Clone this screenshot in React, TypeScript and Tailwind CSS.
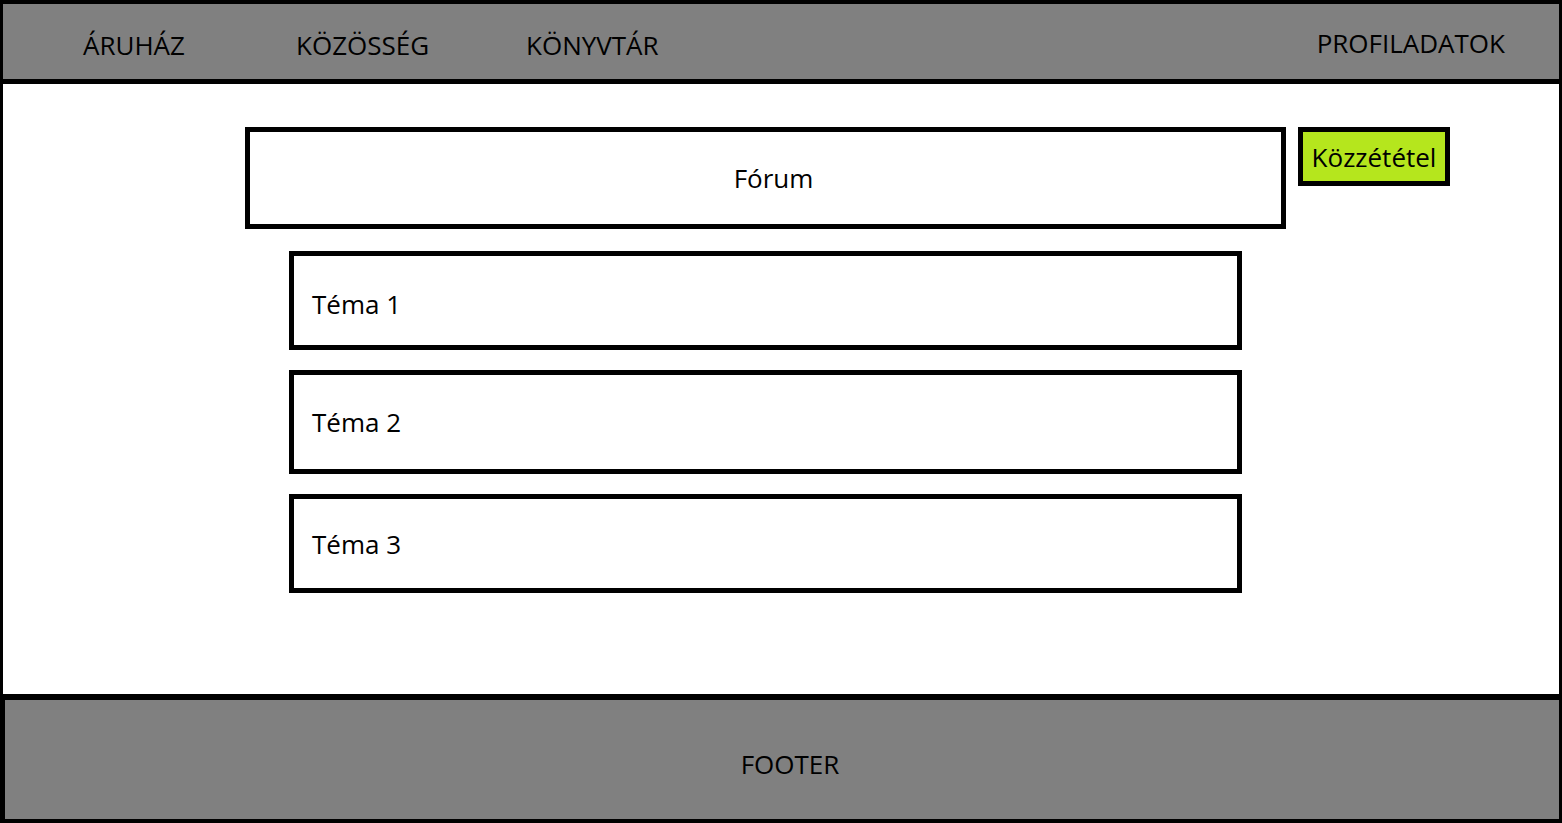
const navItems = [
  { label: 'ÁRUHÁZ', href: '#aruhaz', width: 'w-[213px]' },
  { label: 'KÖZÖSSÉG', href: '#kozosseg', width: 'w-[230px]' },
  { label: 'KÖNYVTÁR', href: '#konyvtar', width: '' },
];

const topics = [
  { title: 'Téma 1', size: 'min-h-[99px] pt-1.5' },
  { title: 'Téma 2', size: 'min-h-[104px]' },
  { title: 'Téma 3', size: 'min-h-[99px]' },
];

function Header() {
  return (
    <header className="flex h-20 items-center justify-between border-b-5 border-black bg-[#808080] pr-[54px] pl-20">
      <nav className="flex pt-1.5">
        {navItems.map((item) => (
          <div key={item.label} className={item.width}>
            <a href={item.href}>{item.label}</a>
          </div>
        ))}
      </nav>
      <a href="#profil" className="pt-0.5">
        PROFILADATOK
      </a>
    </header>
  );
}

function Topic({ title, size }: { title: string; size: string }) {
  return (
    <li className={`flex items-center border-5 border-black pl-[18px] ${size}`}>
      <a href="#tema">{title}</a>
    </li>
  );
}

export default function App() {
  return (
    <div className="flex min-h-screen flex-col bg-black font-['Open_Sans','Noto_Sans',sans-serif] text-[26px] leading-9 text-black">
      <div className="flex grow flex-col border-x-3 border-t-4 border-black bg-white">
        <Header />
        <main className="flex grow items-start gap-3 pt-[43px] pr-[109px] pb-10 pl-[242px]">
          <section className="flex grow flex-col gap-[22px]">
            <h1 className="flex min-h-[102px] items-center justify-center border-5 border-black pl-4">
              Fórum
            </h1>
            <ul className="flex flex-col gap-5 px-11">
              {topics.map((topic) => (
                <Topic key={topic.title} {...topic} />
              ))}
            </ul>
          </section>
          <button
            type="button"
            className="h-[59px] w-[152px] shrink-0 border-5 border-black bg-[#b5e61d] text-center"
          >
            Közzététel
          </button>
        </main>
      </div>
      <footer className="flex h-[129px] items-center justify-center border-t-6 border-r-3 border-b-4 border-l-5 border-black bg-[#808080] pt-2 pl-4">
        FOOTER
      </footer>
    </div>
  );
}
